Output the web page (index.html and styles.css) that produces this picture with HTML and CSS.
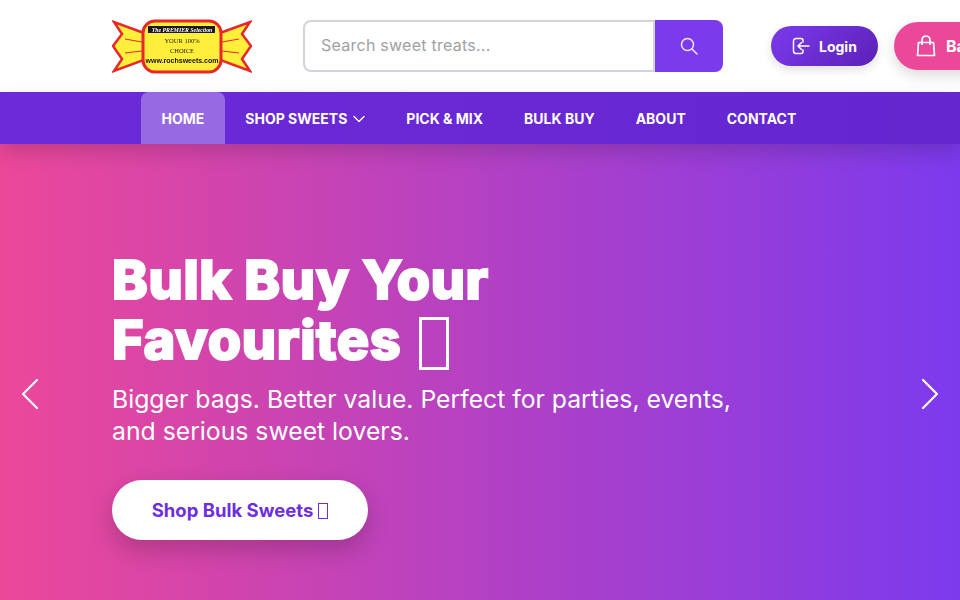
FILE: index.html
```html
<!DOCTYPE html>
<html lang="en">
<head>
    <meta charset="UTF-8">
    <meta name="viewport" content="width=device-width, initial-scale=1.0">
    <title>Rochsweets - Bulk Buy</title>
    <link rel="stylesheet" href="styles.css">
</head>
<body>
    <header class="site-header">
        <a class="logo" href="#">
            <svg width="140" height="56" viewBox="0 0 140 56">
                <path d="M32 15 L2 4 L10 16 L1 28 L10 41 L2 53 L32 42 Z" fill="#ffee3a" stroke="#e8262b" stroke-width="2.500" stroke-linejoin="miter"/>
                <path d="M108 15 L138 4 L130 16 L139 28 L130 41 L138 53 L108 42 Z" fill="#ffee3a" stroke="#e8262b" stroke-width="2.500" stroke-linejoin="miter"/>
                <path d="M13 21 L30 24 M13 35 L30 33 M127 21 L110 24 M127 35 L110 33" stroke="#e8262b" stroke-width="1" fill="none"/>
                <rect x="31" y="3" width="78" height="51" rx="12" fill="#ffee3a" stroke="#e8262b" stroke-width="3"/>
                <rect x="36" y="8" width="67" height="7" fill="#1a1a1a"/>
                <text x="70" y="14" class="logo-top">The PREMIER Selection</text>
                <text x="70" y="25" class="logo-line">YOUR 100%</text>
                <text x="70" y="35" class="logo-line">CHOICE</text>
                <text x="70" y="45" class="logo-url">www.rochsweets.com</text>
            </svg>
        </a>
        <form class="search-form">
            <input class="search-input" type="text" placeholder="Search sweet treats...">
            <button class="search-button" type="button" aria-label="Search">
                <svg width="18" height="18" viewBox="0 0 18 18" fill="none" stroke="currentColor" stroke-width="1.500" stroke-linecap="round">
                    <circle cx="7.500" cy="7.500" r="6"/>
                    <path d="M12 12 L17 17"/>
                </svg>
            </button>
        </form>
        <div class="header-actions">
            <a class="btn-login" href="#">
                <svg width="18" height="18" viewBox="0 0 18 18" fill="none" stroke="currentColor" stroke-width="1.500" stroke-linecap="round" stroke-linejoin="round">
                    <path d="M11 5 V3.500 A2 2 0 0 0 9 1.500 H4 A2.500 2.500 0 0 0 1.500 4 V14 A2.500 2.500 0 0 0 4 16.500 H9 A2 2 0 0 0 11 14.500 V13"/>
                    <path d="M17 9 H6 M9.500 5.500 L6 9 L9.500 12.500"/>
                </svg>
                Login
            </a>
            <a class="btn-basket" href="#">
                <svg width="20" height="22" viewBox="0 0 20 22" fill="none" stroke="currentColor" stroke-width="1.700" stroke-linejoin="round">
                    <path d="M2.500 7.500 H17.500 L18.500 20.500 H1.500 Z"/>
                    <path d="M6 10 V5 A4 4 0 0 1 14 5 V10"/>
                </svg>
                Basket
            </a>
        </div>
    </header>

    <nav class="main-nav">
        <a class="nav-link active" href="#">HOME</a>
        <a class="nav-link" href="#">SHOP SWEETS
            <svg class="chevron" width="12" height="8" viewBox="0 0 12 8" fill="none" stroke="currentColor" stroke-width="1.400" stroke-linecap="round" stroke-linejoin="round"><path d="M1 1.500 L6 6.500 L11 1.500"/></svg>
        </a>
        <a class="nav-link" href="#">PICK &amp; MIX</a>
        <a class="nav-link" href="#">BULK BUY</a>
        <a class="nav-link" href="#">ABOUT</a>
        <a class="nav-link" href="#">CONTACT</a>
    </nav>

    <section class="hero">
        <div class="hero-content">
            <h1>Bulk Buy Your<br>Favourites <span class="tofu"></span></h1>
            <p>Bigger bags. Better value. Perfect for parties, events, and serious sweet lovers.</p>
            <a class="hero-btn" href="#">Shop Bulk Sweets <span class="tofu"></span></a>
        </div>
        <button class="carousel-arrow arrow-prev" type="button" aria-label="Previous">
            <svg width="18" height="32" viewBox="0 0 18 32" fill="none" stroke="currentColor" stroke-width="2.200" stroke-linecap="round" stroke-linejoin="round"><path d="M16 2 L2 16 L16 30"/></svg>
        </button>
        <button class="carousel-arrow arrow-next" type="button" aria-label="Next">
            <svg width="18" height="32" viewBox="0 0 18 32" fill="none" stroke="currentColor" stroke-width="2.200" stroke-linecap="round" stroke-linejoin="round"><path d="M2 2 L16 16 L2 30"/></svg>
        </button>
    </section>
</body>
</html>
```

FILE: styles.css
```css
:root {
    --purple: #7c3aed;
    --purple-dark: #5b21b6;
    --pink: #ec4899;
}

* {
    margin: 0;
    padding: 0;
    box-sizing: border-box;
}

html, body {
    overflow: hidden;
}

body {
    height: 600px;
    background-color: white;
    font-family: "Inter", "Open Sans", sans-serif;
    color: #333;
}

a {
    text-decoration: none;
}

.site-header {
    display: flex;
    align-items: center;
    height: 92px;
    padding-left: 112px;
    width: 1100px;
}

.logo {
    display: block;
    width: 140px;
    height: 56px;
    margin-right: 51px;
    flex-shrink: 0;
}

.logo svg {
    filter: blur(0.3px);
}

.logo-top {
    font: italic 700 5.800px "Liberation Serif", serif;
    fill: white;
    text-anchor: middle;
}

.logo-line {
    font: 6.500px "Liberation Serif", serif;
    fill: #222;
    text-anchor: middle;
}

.logo-url {
    font: 700 7px "Liberation Sans", sans-serif;
    fill: #111;
    text-anchor: middle;
}

.search-form {
    display: flex;
    width: 420px;
    height: 52px;
    margin-right: 48px;
    flex-shrink: 0;
}

.search-input {
    flex: 1;
    min-width: 0;
    padding: 0 16px 2px;
    border: 2px solid #d1d5db;
    border-radius: 8px 0 0 8px;
    outline: none;
    font-family: inherit;
    font-size: 16px;
    letter-spacing: 0.250px;
}

.search-input::placeholder {
    color: #9f9fa5;
}

.search-button {
    width: 68px;
    border: none;
    border-radius: 0 8px 8px 0;
    background-color: var(--purple);
    color: #f3e8ff;
    display: flex;
    align-items: center;
    justify-content: center;
}

.header-actions {
    display: flex;
    align-items: center;
    gap: 16px;
    flex-shrink: 0;
}

.btn-login,
.btn-basket {
    display: flex;
    align-items: center;
    color: white;
    font-weight: 700;
    border-radius: 999px;
}

.btn-login {
    height: 40px;
    width: 107px;
    padding-left: 21px;
    gap: 9px;
    font-size: 14px;
    background: linear-gradient(135deg, var(--purple), var(--purple-dark));
    box-shadow: 0 4px 10px rgba(0, 0, 0, 0.12);
}

.btn-basket {
    height: 48px;
    padding: 0 24px 0 22px;
    gap: 10px;
    font-size: 16px;
    background-color: var(--pink);
    box-shadow: 0 6px 14px rgba(0, 0, 0, 0.14);
}

.main-nav {
    position: relative;
    z-index: 2;
    display: flex;
    height: 52px;
    padding-left: 141px;
    background: linear-gradient(90deg, #6c2ad8, #6526d0);
    box-shadow: 0 8px 20px rgba(0, 0, 0, 0.16);
}

.nav-link {
    display: flex;
    align-items: center;
    gap: 6px;
    padding: 0 20.500px;
    color: white;
    font-size: 14px;
    font-weight: 700;
    white-space: nowrap;
}

.nav-link.active {
    background-color: rgba(255, 255, 255, 0.3);
    border-radius: 8px 8px 0 0;
}

.chevron {
    margin-top: 2px;
}

.hero {
    position: relative;
    height: 456px;
    padding: 106px 0 0 112px;
    overflow: hidden;
    background: linear-gradient(90deg, var(--pink), var(--purple));
    color: white;
}

.hero-content {
    width: 640px;
}

.hero h1 {
    font-size: 54px;
    font-weight: 800;
    line-height: 60px;
    letter-spacing: 0.600px;
    margin-bottom: 13px;
    white-space: nowrap;
    -webkit-text-stroke: 2px white;
}

.tofu {
    display: inline-block;
    border: 1.500px solid currentColor;
}

.hero h1 .tofu {
    width: 30px;
    height: 53px;
    margin-left: 5px;
    border-width: 3px;
    vertical-align: -11px;
}

.hero p {
    font-size: 24.750px;
    line-height: 32px;
    font-weight: 400;
    margin-bottom: 33px;
}

.hero-btn {
    display: inline-flex;
    align-items: center;
    justify-content: center;
    gap: 5px;
    width: 256px;
    height: 60px;
    border-radius: 30px;
    background-color: white;
    color: #6d2de0;
    font-size: 18.500px;
    font-weight: 700;
    box-shadow: 0 10px 24px rgba(0, 0, 0, 0.2);
}

.hero-btn .tofu {
    width: 10px;
    height: 16px;
    margin-top: 2px;
}

.carousel-arrow {
    position: absolute;
    top: 234px;
    border: none;
    background: none;
    color: white;
}

.arrow-prev {
    left: 21px;
}

.arrow-next {
    right: 21px;
}
```
